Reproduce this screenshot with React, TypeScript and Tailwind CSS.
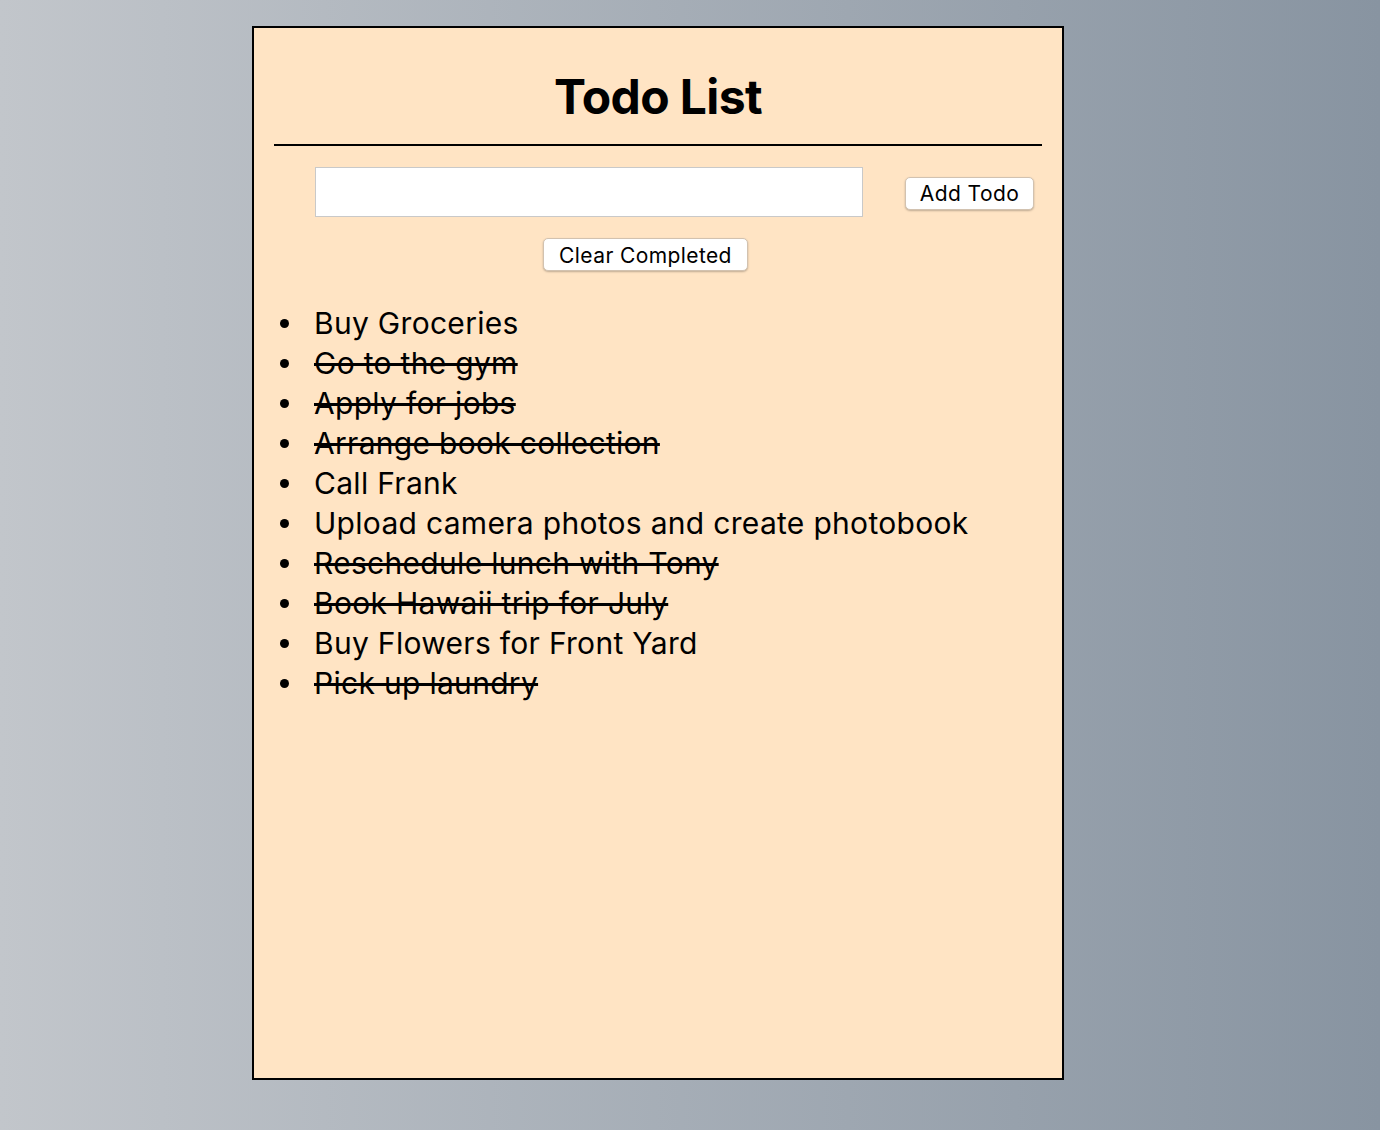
import React from 'react';

interface Todo {
  id: number;
  text: string;
  done: boolean;
}

const todos: Todo[] = [
  { id: 1, text: 'Buy Groceries', done: false },
  { id: 2, text: 'Go to the gym', done: true },
  { id: 3, text: 'Apply for jobs', done: true },
  { id: 4, text: 'Arrange book collection', done: true },
  { id: 5, text: 'Call Frank', done: false },
  { id: 6, text: 'Upload camera photos and create photobook', done: false },
  { id: 7, text: 'Reschedule lunch with Tony', done: true },
  { id: 8, text: 'Book Hawaii trip for July', done: true },
  { id: 9, text: 'Buy Flowers for Front Yard', done: false },
  { id: 10, text: 'Pick up laundry', done: true },
];

const App: React.FC = () => {
  return (
    <div className="min-h-[1130px] w-full bg-gradient-to-r from-[#c2c6cb] to-[#8894a1] pt-[26px] font-['Inter','Liberation_Sans',sans-serif] text-black">
      <div className="ml-[252px] flex h-[1054px] w-[812px] flex-col border-2 border-black bg-[#ffe4c4] px-[20px]">
        <h1 className="mt-[41px] text-center text-[48px] font-bold leading-[56px] tracking-[-0.6px]">Todo List</h1>
        <hr className="mt-[19px] border-t-2 border-black" />

        <div className="mt-[21px] flex items-center">
          <input
            type="text"
            className="ml-[41px] h-[50px] w-[548px] border border-[#c9c9c9] bg-white px-2 text-[20px] outline-none"
          />
          <button className="ml-[42px] mt-[2px] h-[33px] w-[129px] rounded-[5px] border border-[#d2c2b0] bg-white text-[21px] leading-none tracking-[0.4px] shadow-[0_1px_2px_rgba(0,0,0,0.25)]">
            Add Todo
          </button>
        </div>

        <div className="mt-[21px] flex">
          <button className="ml-[269px] h-[33px] w-[205px] rounded-[5px] border border-[#d2c2b0] bg-white pt-[2px] text-[21px] leading-none tracking-[0.4px] shadow-[0_1px_2px_rgba(0,0,0,0.25)]">
            Clear Completed
          </button>
        </div>

        <ul className="mt-[32px] text-[30px] leading-[40px] tracking-[0.3px]">
          {todos.map((todo) => (
            <li key={todo.id} className="flex items-center">
              <span className="flex w-[40px] shrink-0">
                <span className="ml-[6px] h-[9px] w-[9px] rounded-full bg-black" />
              </span>
              <span className={todo.done ? 'line-through' : ''}>{todo.text}</span>
            </li>
          ))}
        </ul>
      </div>
    </div>
  );
};

export default App;
